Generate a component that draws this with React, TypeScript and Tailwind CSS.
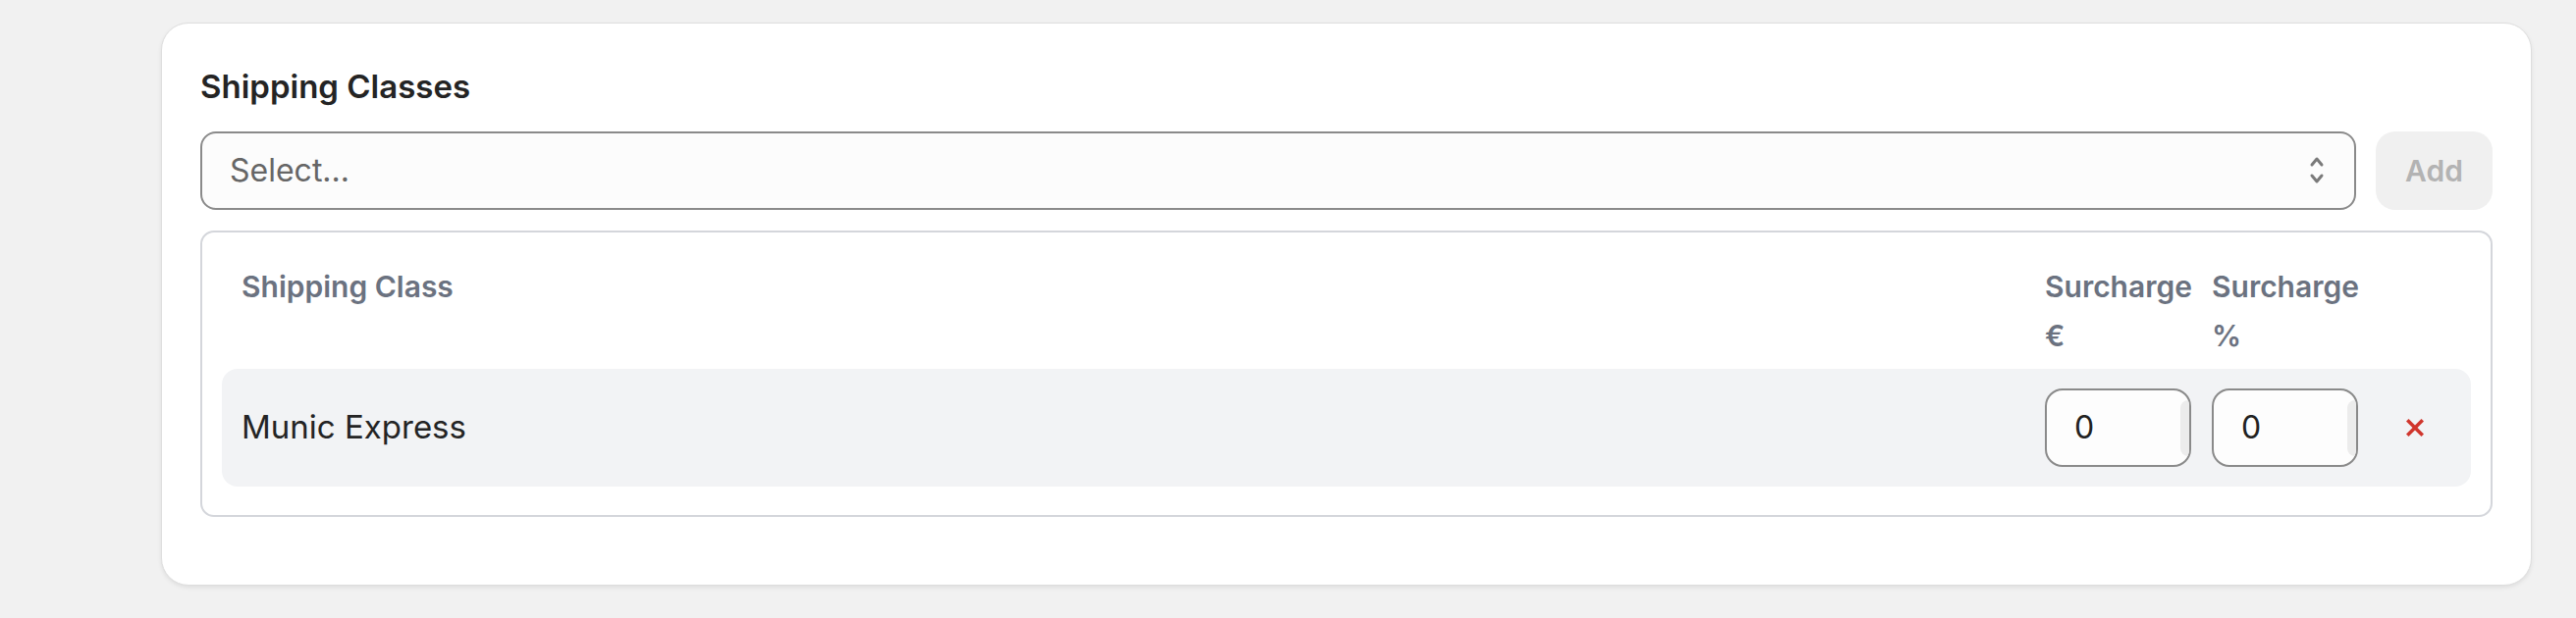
import React from 'react';

function UpDownIcon() {
  return (
    <svg width="20" height="34" viewBox="0 0 20 34" fill="none" stroke="#7a7a7a" strokeWidth="3" strokeLinecap="round" strokeLinejoin="round">
      <path d="M5 11 L10 5 L15 11" />
      <path d="M5 22 L10 28 L15 22" />
    </svg>
  );
}

function RemoveIcon() {
  return (
    <svg width="18" height="18" viewBox="0 0 18 18" fill="none" stroke="#d0352c" strokeWidth="3.5" strokeLinecap="square">
      <path d="M2.5 2.5 L15.5 15.5" />
      <path d="M15.5 2.5 L2.5 15.5" />
    </svg>
  );
}

function NumberField({ value }: { value: string }) {
  return (
    <div className="w-[149px] h-[80px] flex items-stretch border-2 border-[#8a8a8a] rounded-[18px] bg-[#fdfdfd] overflow-hidden">
      <input
        readOnly
        value={value}
        className="flex-1 min-w-0 bg-transparent pl-[28px] text-[32px] text-[#222] outline-none"
      />
      <div className="flex items-center">
        <div className="w-[9px] h-[57px] rounded-l-[8px] bg-[#ececec]" />
      </div>
    </div>
  );
}

export default function App() {
  return (
    <div
      className="min-h-screen bg-[#f1f1f1] pl-[164px] pr-[45px] pt-[23px]"
      style={{ fontFamily: 'Inter, "Noto Sans", sans-serif' }}
    >
      <div className="bg-white border border-[#dedede] rounded-[28px] shadow-[0_2px_4px_rgba(0,0,0,0.08)] px-[39px] pt-[39px] pb-[69px]">
        <h2 className="text-[33px] font-semibold leading-[50px] text-[#242424] mb-[21px]">Shipping Classes</h2>

        {/* Select + add */}
        <div className="flex gap-[20px] h-[80px]">
          <div className="flex-1 flex items-center justify-between border-2 border-[#8a8a8a] rounded-[16px] bg-[#fcfcfc] pl-[28px] pr-[28px]">
            <span className="text-[32px] text-[#666]">Select...</span>
            <UpDownIcon />
          </div>
          <button className="w-[119px] rounded-[20px] bg-[#f0f0f0] text-[30px] font-semibold text-[#b3b3b3]">
            Add
          </button>
        </div>

        {/* Table */}
        <div className="mt-[21px] border-2 border-[#d4d6db] rounded-[14px] px-[20px] pt-[30px] pb-[29px]">
          <div className="flex items-start px-[20px] pr-[29px] mb-[9px] text-[30px] font-semibold leading-[50px] text-[#6b7280]">
            <div className="flex-1">Shipping Class</div>
            <div className="w-[149px]">Surcharge €</div>
            <div className="w-[149px] ml-[21px]">Surcharge %</div>
            <div className="w-[56px] ml-[30px]" />
          </div>

          <div className="flex items-center h-[120px] bg-[#f2f3f5] rounded-[16px] px-[20px] pr-[29px]">
            <div className="flex-1 text-[33px] text-[#242424]">Munic Express</div>
            <NumberField value="0" />
            <div className="ml-[21px]">
              <NumberField value="0" />
            </div>
            <button className="w-[56px] h-[56px] ml-[30px] flex items-center justify-center">
              <RemoveIcon />
            </button>
          </div>
        </div>
      </div>
    </div>
  );
}
